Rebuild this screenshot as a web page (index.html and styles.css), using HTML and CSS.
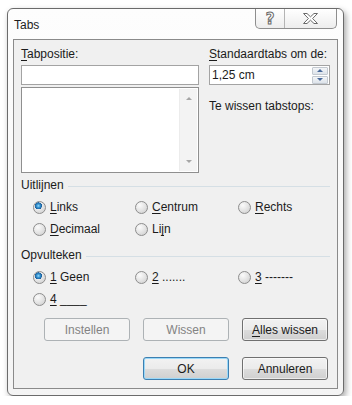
FILE: index.html
```html
<!DOCTYPE html>
<html lang="nl">
<head>
    <meta charset="UTF-8">
    <meta name="viewport" content="width=device-width, initial-scale=1.0">
    <title>Tabs</title>
    <link rel="stylesheet" href="styles.css">
</head>
<body>
    <div class="window">
        <div class="titlebar">
            <span class="title">Tabs</span>
            <div class="caption-btns">
                <span class="cap help">?</span>
                <span class="cap close">
                    <svg width="15" height="11" viewBox="0 0 15 11">
                        <polygon points="0.5,0.5 4,0.5 7.5,3.8 11,0.5 14.5,0.5 9.6,5.5 14.5,10.5 11,10.5 7.5,7.2 4,10.5 0.5,10.5 5.4,5.5" fill="#fff" stroke="#6a6a6a" stroke-width="1"/>
                    </svg>
                </span>
            </div>
        </div>

        <div class="client">
            <div class="top">
                <div class="col">
                    <div class="label"><u>T</u>abpositie:</div>
                    <input class="field" type="text">
                    <div class="list">
                        <div class="vscroll">
                            <span class="arr up"></span>
                            <span class="arr down"></span>
                        </div>
                    </div>
                </div>
                <div class="col">
                    <div class="label"><u>S</u>tandaardtabs om de:</div>
                    <div class="spin">
                        <span class="spin-value">1,25 cm</span>
                        <div class="spin-btns">
                            <span class="sb"><i class="tri up"></i></span>
                            <span class="sb"><i class="tri down"></i></span>
                        </div>
                    </div>
                    <div class="label clear-label">Te wissen tabstops:</div>
                </div>
            </div>

            <div class="group">
                <div class="group-head">Uitlijnen</div>
                <div class="options">
                    <label class="opt"><input type="radio" name="align" checked><span><u>L</u>inks</span></label>
                    <label class="opt"><input type="radio" name="align"><span><u>C</u>entrum</span></label>
                    <label class="opt"><input type="radio" name="align"><span><u>R</u>echts</span></label>
                    <label class="opt"><input type="radio" name="align"><span><u>D</u>ecimaal</span></label>
                    <label class="opt"><input type="radio" name="align"><span>Li<u>j</u>n</span></label>
                </div>
            </div>

            <div class="group second">
                <div class="group-head">Opvulteken</div>
                <div class="options">
                    <label class="opt"><input type="radio" name="leader" checked><span><u>1</u> Geen</span></label>
                    <label class="opt"><input type="radio" name="leader"><span><u>2</u> .......</span></label>
                    <label class="opt"><input type="radio" name="leader"><span><u>3</u> -------</span></label>
                    <label class="opt"><input type="radio" name="leader"><span><u>4</u> ____</span></label>
                </div>
            </div>

            <div class="btn-row">
                <button disabled>Instellen</button>
                <button disabled>Wissen</button>
                <button><u>A</u>lles wissen</button>
            </div>
            <div class="btn-row last">
                <button class="default">OK</button>
                <button>Annuleren</button>
            </div>
        </div>
    </div>
</body>
</html>
```

FILE: styles.css
```css
* {
    box-sizing: border-box;
}
body {
    margin: 0;
    background: #ffffff;
    color: #1b1b1b;
    font: 12px "Liberation Sans", Arial, sans-serif;
}
u {
    text-decoration-thickness: 1px;
    text-underline-offset: 2px;
}

/* window frame */
.window {
    margin: 8px 0 0 7px;
    width: 337px;
    height: 388px;
    border: 1px solid #6b6b6b;
    border-radius: 6px;
    background: linear-gradient(#fdfdfd, #f4f4f4);
    box-shadow: 2px 3px 6px rgba(0, 0, 0, 0.35);
    padding: 0 5px 6px;
    display: flex;
    flex-direction: column;
}
.titlebar {
    height: 30px;
    display: flex;
    align-items: flex-start;
}
.title {
    padding: 9px 0 0 1px;
    line-height: 15px;
    color: #1e1e1e;
}
.caption-btns {
    margin-left: auto;
    margin-right: 1px;
    height: 20px;
    display: flex;
    border: 1px solid #8e8e8e;
    border-top: none;
    border-radius: 0 0 5px 5px;
    background: linear-gradient(#ffffff, #ededed);
    overflow: hidden;
}
.cap {
    display: flex;
    align-items: center;
    justify-content: center;
}
.help {
    width: 29px;
    border-right: 1px solid #b4b4b4;
    font: bold 15px "DejaVu Sans", sans-serif;
    color: #ffffff;
    -webkit-text-stroke: 1px #6a6a6a;
}
.close {
    width: 51px;
}

/* client area */
.client {
    flex: 1;
    border: 1px solid #8a8a8a;
    background: #f0f0f0;
    padding: 7px 7px 8px;
    display: flex;
    flex-direction: column;
}
.top {
    display: grid;
    grid-template-columns: 178px 121px;
    column-gap: 10px;
}
.label {
    line-height: 15px;
    margin-bottom: 3px;
}
.field {
    display: block;
    width: 100%;
    height: 20px;
    margin: 0;
    border: 1px solid #a3a3a3;
    background: #ffffff;
}
.list {
    margin-top: 2px;
    height: 86px;
    border: 1px solid #8f8f8f;
    background: #ffffff;
    display: flex;
    justify-content: flex-end;
    padding: 1px;
}
.vscroll {
    width: 18px;
    background: #f3f3f3;
    border-left: 1px solid #ececec;
    display: flex;
    flex-direction: column;
    justify-content: space-between;
    align-items: center;
    padding: 8px 0 8px;
}
.arr {
    width: 0;
    height: 0;
    border-left: 3px solid transparent;
    border-right: 3px solid transparent;
}
.arr.up {
    border-bottom: 3px solid #a6a6a6;
}
.arr.down {
    border-top: 3px solid #a6a6a6;
}
.spin {
    height: 20px;
    border: 1px solid #a3a3a3;
    background: #ffffff;
    display: flex;
    align-items: center;
    padding: 0 1px 0 2px;
}
.spin-btns {
    margin-left: auto;
    width: 16px;
    display: flex;
    flex-direction: column;
    gap: 1px;
}
.sb {
    height: 8px;
    border: 1px solid #c3c9d0;
    border-radius: 1px;
    background: linear-gradient(#f4f6f8, #dde3ea);
    display: flex;
    align-items: center;
    justify-content: center;
}
.tri {
    width: 0;
    height: 0;
    border-left: 3px solid transparent;
    border-right: 3px solid transparent;
}
.tri.up {
    border-bottom: 3px solid #4a6b9c;
}
.tri.down {
    border-top: 3px solid #4a6b9c;
}
.clear-label {
    margin-top: 14px;
}

/* option groups */
.group {
    margin-top: 5px;
}
.group.second {
    margin-top: 11px;
}
.group-head {
    display: flex;
    align-items: center;
    line-height: 15px;
    margin-bottom: 7px;
}
.group-head::after {
    content: "";
    flex: 1;
    height: 1px;
    margin: 1px 0 0 4px;
    background: #d5dfe5;
}
.options {
    display: grid;
    grid-template-columns: 102px 103px 1fr;
    row-gap: 7px;
    padding-left: 12px;
    line-height: 15px;
}
.opt {
    display: flex;
    align-items: center;
    gap: 4px;
}
.opt input {
    appearance: none;
    width: 13px;
    height: 13px;
    margin: 0;
    border: 1px solid #8d8d8d;
    border-radius: 50%;
    background: radial-gradient(circle at 35% 30%, #fbfbfb 0, #e4e4e4 50%, #cbcbcb 100%);
}
.opt input:checked {
    background:
        radial-gradient(circle at 40% 35%, #9fdcfb 0, #3b9ad6 1.6px, #1b5e9b 3.4px, transparent 3.6px),
        radial-gradient(circle at 35% 30%, #fbfbfb 0, #e4e4e4 50%, #cbcbcb 100%);
}

/* buttons */
.btn-row {
    display: flex;
    justify-content: flex-end;
    gap: 13px;
    padding-right: 2px;
    margin-top: 11px;
}
.btn-row.last {
    margin-top: 16px;
}
button {
    width: 86px;
    height: 23px;
    margin: 0;
    padding: 0;
    font: 12px "Liberation Sans", Arial, sans-serif;
    color: #1b1b1b;
    border: 1px solid #707070;
    border-radius: 3px;
    background: linear-gradient(#f2f2f2 0%, #ebebeb 50%, #dddddd 51%, #cfcfcf 100%);
    box-shadow: inset 0 0 0 1px rgba(255, 255, 255, 0.6);
}
button:disabled {
    border-color: #adb2b5;
    background: #f4f4f4;
    color: #838383;
    box-shadow: none;
}
button.default {
    border-color: #3c7fb1;
    box-shadow: inset 0 0 0 1px #9ad8f8;
}
```
